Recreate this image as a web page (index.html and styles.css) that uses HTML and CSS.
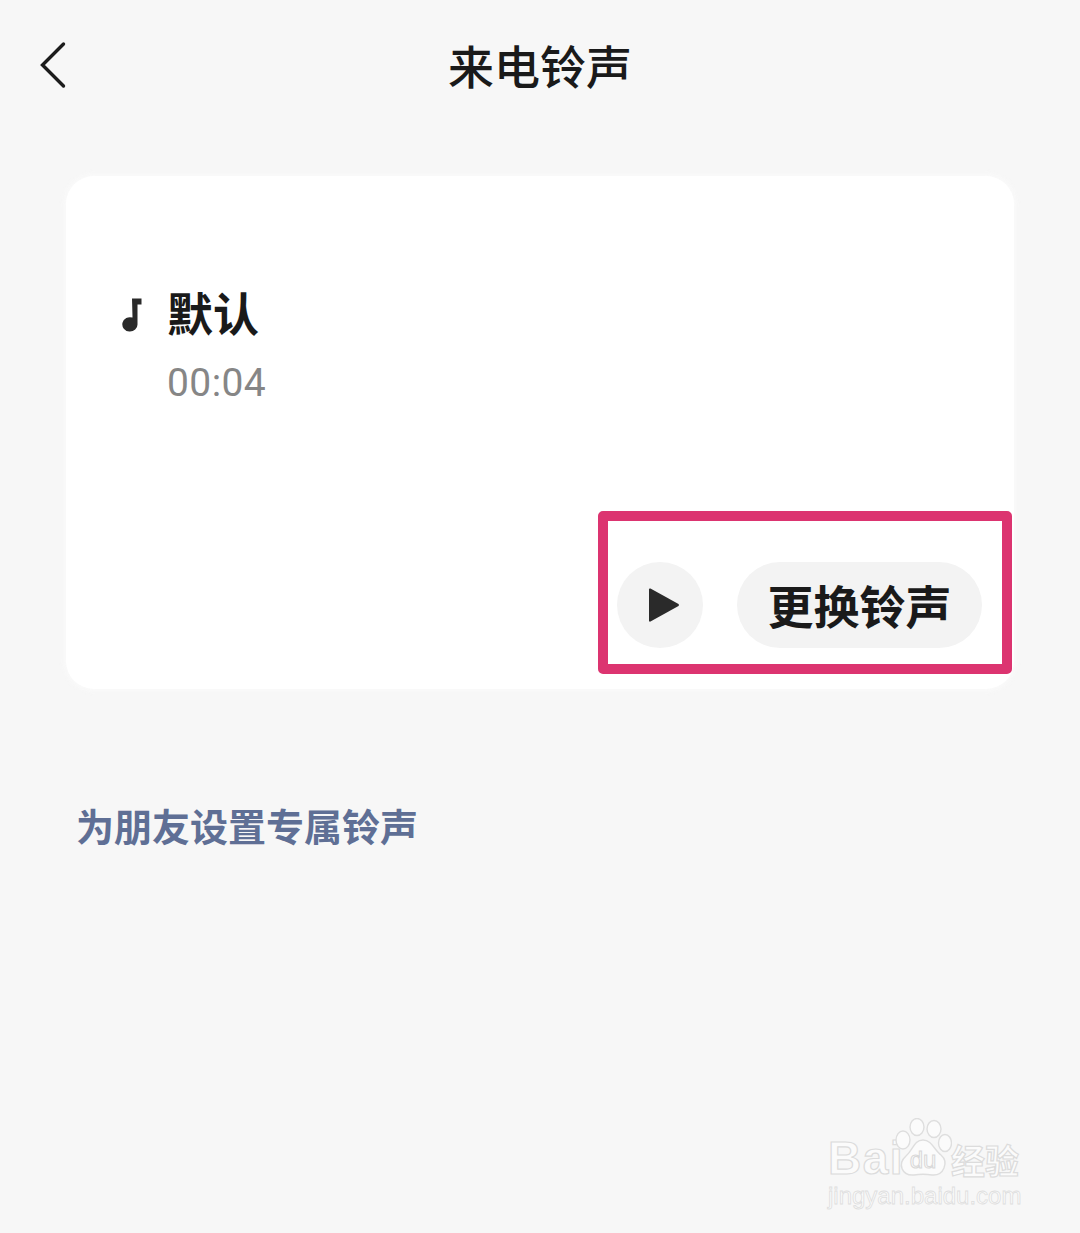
FILE: index.html
```html
<!DOCTYPE html>
<html lang="zh-CN">
<head>
<meta charset="utf-8">
<title>来电铃声</title>
<link rel="stylesheet" href="styles.css">
</head>
<body>
<div class="page">
  <header class="topbar">
    <svg class="back" width="28" height="48" viewBox="0 0 28 48"><path d="M24.5 3 L3.5 24 L24.5 45" fill="none" stroke="#1c1c1c" stroke-width="3.4" stroke-linecap="round" stroke-linejoin="miter"/></svg>
    <h1 class="title">来电铃声</h1>
  </header>
  <section class="card">
    <div class="tone">
      <svg class="note" width="21" height="35" viewBox="0 0 21 35"><path d="M11 1.5 H20.5 V7.5 H16.5 V27 A7.6 7.2 0 1 1 11.5 20.6 Z" fill="#2a2a2a"/></svg>
      <div class="tone-text">
        <div class="tone-name">默认</div>
        <div class="tone-time">00:04</div>
      </div>
    </div>
    <div class="actions">
      <div class="play"><svg width="32" height="36" viewBox="0 0 32 36"><path d="M2.5 1.5 L30.5 17 Q31.5 18 30.5 19 L2.5 34.5 Q1 35 1 33.5 V2.5 Q1 1 2.5 1.5 Z" fill="#2a2a2a"/></svg></div>
      <div class="change">更换铃声</div>
    </div>
    <div class="highlight"></div>
  </section>
  <div class="friends">为朋友设置专属铃声</div>
  <div class="watermark">
    <div class="wm-top">
      <span class="wm-bai">Bai</span>
      <svg class="wm-paw" width="58" height="62" viewBox="0 0 58 62"><g fill="#fbfbfb" stroke="#dedede" stroke-width="1.4"><ellipse cx="23" cy="9" rx="7" ry="8.5"/><ellipse cx="40" cy="11" rx="7" ry="8.5"/><ellipse cx="9" cy="22" rx="7" ry="9"/><ellipse cx="51" cy="25" rx="6.5" ry="8.5"/><path d="M29 22 C38 22 40 32 47 37 C55 44 50 58 38 57 C32 56 26 56 20 57 C8 58 3 46 12 38 C19 32 20 22 29 22 Z"/></g><text x="29" y="50" text-anchor="middle" class="wm-du">du</text></svg>
      <span class="wm-cn">经验</span>
    </div>
    <div class="wm-url">jingyan.baidu.com</div>
  </div>
</div>
</body>
</html>
```
FILE: styles.css
```css
* { box-sizing: border-box; }
html, body { margin: 0; padding: 0; }
body {
  background: #f7f7f7;
  font-family: "Noto Sans CJK SC", "Noto Sans", sans-serif;
}
.page {
  position: relative;
  width: 1080px;
  height: 1233px;
  overflow: hidden;
}
.topbar {
  position: relative;
  height: 133px;
  padding-bottom: 5px;
  display: flex;
  align-items: center;
  justify-content: center;
}
.back {
  position: absolute;
  left: 39px;
  top: 41px;
}
.title {
  margin: 0;
  font-size: 46px;
  font-weight: 500;
  line-height: 60px;
  color: #1a1a1a;
}
.card {
  position: relative;
  margin: 43px 66px 0;
  width: 948px;
  height: 513px;
  background: #fff;
  border-radius: 28px;
  box-shadow: 0 0 6px 1px rgba(252, 252, 252, 0.9);
  padding: 105px 32px 41px 55px;
  display: flex;
  flex-direction: column;
  justify-content: space-between;
}
.tone {
  display: flex;
  align-items: flex-start;
  gap: 25px;
}
.note { margin-top: 16px; }
.tone-text {
  display: flex;
  flex-direction: column;
  gap: 20px;
}
.tone-name {
  font-size: 46px;
  font-weight: 700;
  line-height: 60px;
  color: #1a1a1a;
}
.tone-time {
  font-family: Roboto, sans-serif;
  font-size: 39px;
  font-weight: 400;
  line-height: 44px;
  letter-spacing: 0.4px;
  color: #868686;
}
.actions {
  display: flex;
  justify-content: flex-end;
  align-items: center;
  gap: 34px;
}
.play {
  width: 86px;
  height: 86px;
  border-radius: 50%;
  background: #f3f3f3;
  display: flex;
  align-items: center;
  justify-content: center;
  padding-left: 8px;
}
.change {
  height: 86px;
  width: 245px;
  border-radius: 43px;
  background: #f3f3f3;
  padding-bottom: 3px;
  display: flex;
  align-items: center;
  justify-content: center;
  font-size: 46px;
  font-weight: 700;
  color: #1a1a1a;
}
.highlight {
  position: absolute;
  left: 532px;
  top: 335px;
  width: 414px;
  height: 163px;
  border: 10px solid #dc3470;
  border-radius: 5px;
}
.friends {
  margin: 111px 0 0 76px;
  font-size: 38px;
  font-weight: 700;
  line-height: 50px;
  color: #5f6f95;
}
.watermark {
  position: absolute;
  left: 828px;
  top: 1116px;
  width: 200px;
  color: #fbfbfb;
}
.wm-top {
  display: flex;
  align-items: flex-end;
  height: 64px;
}
.wm-bai {
  font-family: "Liberation Sans", sans-serif;
  font-size: 46px;
  font-weight: 700;
  line-height: 48px;
  letter-spacing: 1.5px;
  -webkit-text-stroke: 1.2px #dcdcdc;
  width: 67px;
  margin-bottom: -2px;
}
.wm-paw { flex: none; margin-left: -1px; }
.wm-du {
  font-family: "Liberation Sans", sans-serif;
  font-size: 24px;
  fill: #fbfbfb;
  stroke: #d8d8d8;
  stroke-width: 1;
}
.wm-cn {
  font-size: 34px;
  font-weight: 700;
  line-height: 40px;
  white-space: nowrap;
  -webkit-text-stroke: 1.2px #dcdcdc;
  margin-left: -1px;
}
.wm-url {
  font-family: "Liberation Sans", sans-serif;
  font-size: 24px;
  line-height: 26px;
  margin-top: 3px;
  white-space: nowrap;
  -webkit-text-stroke: 0.8px #dedede;
}
```
